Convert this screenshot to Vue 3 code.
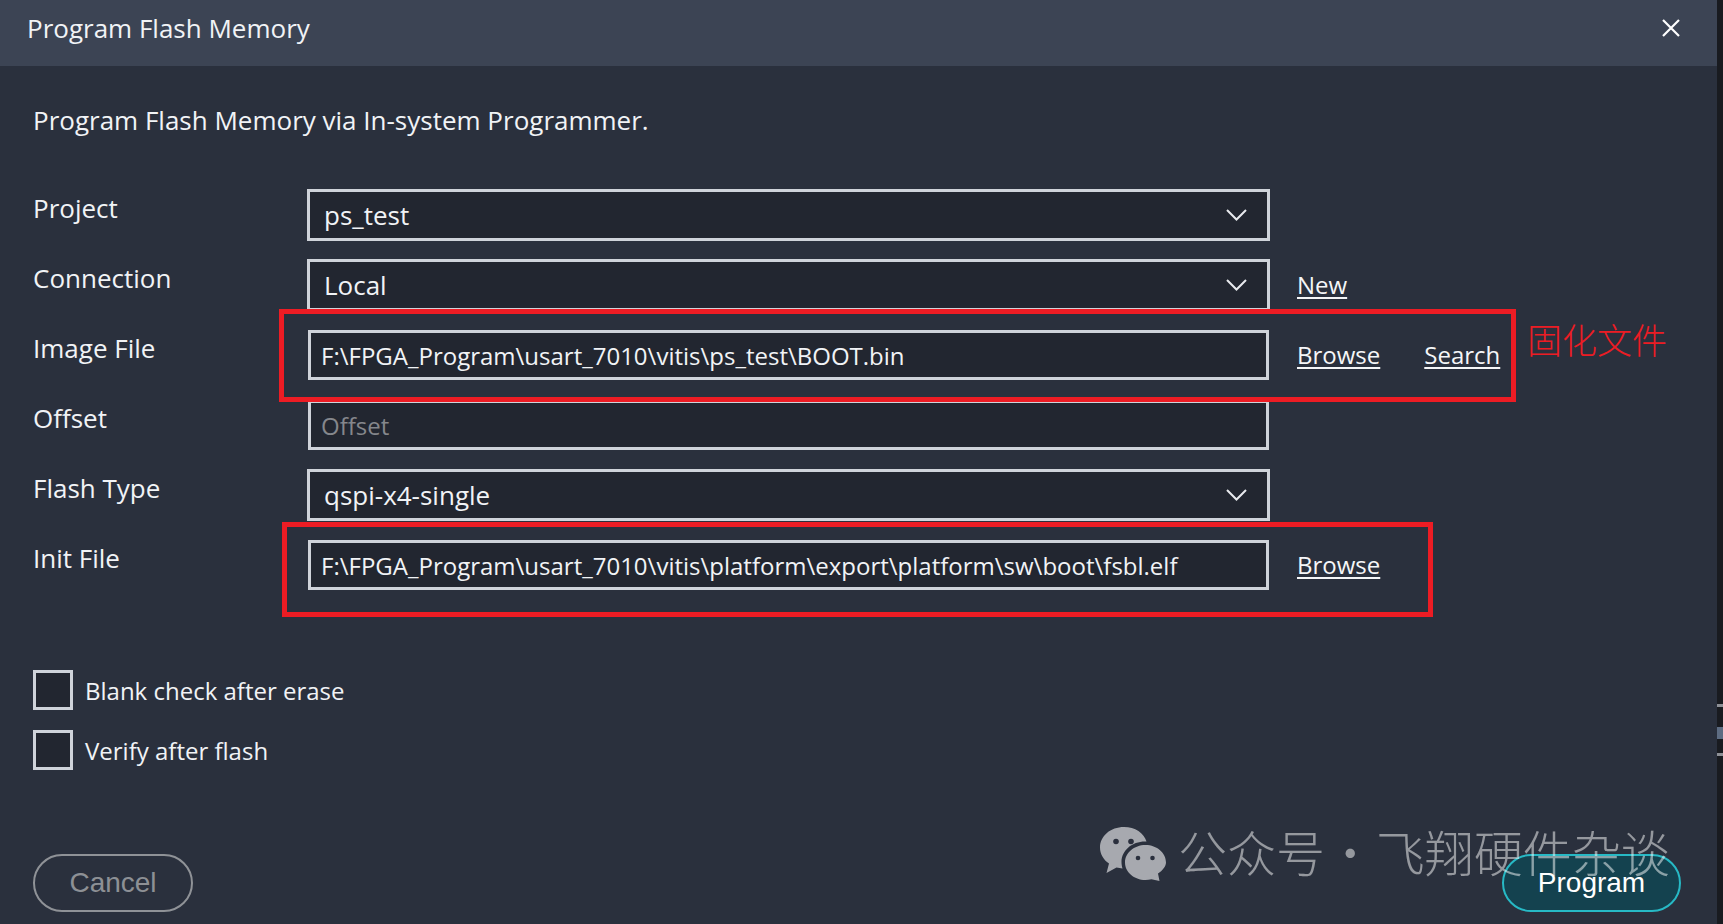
<script setup>
const rows = [
  { label: 'Project', kind: 'select', value: 'ps_test', links: [] },
  { label: 'Connection', kind: 'select', value: 'Local', links: ['New'] },
  { label: 'Image File', kind: 'input', value: 'F:\\FPGA_Program\\usart_7010\\vitis\\ps_test\\BOOT.bin', links: ['Browse', 'Search'] },
  { label: 'Offset', kind: 'input', value: '', placeholder: 'Offset', links: [] },
  { label: 'Flash Type', kind: 'select', value: 'qspi-x4-single', links: [] },
  { label: 'Init File', kind: 'input', value: 'F:\\FPGA_Program\\usart_7010\\vitis\\platform\\export\\platform\\sw\\boot\\fsbl.elf', links: ['Browse'] },
]
const checks = ['Blank check after erase', 'Verify after flash']
</script>

<template>
  <div class="page">
    <div class="dialog">
      <header class="head">
        <span class="title">Program Flash Memory</span>
        <svg class="close" width="18" height="18" viewBox="0 0 18 18" aria-label="Close">
          <path d="M1 1 17 17M17 1 1 17" stroke="#fff" stroke-width="2.2" fill="none" />
        </svg>
      </header>
      <main class="body">
        <p class="desc">Program Flash Memory via In-system Programmer.</p>
        <div class="form">
          <div v-for="r in rows" :key="r.label" class="row">
            <label class="lbl">{{ r.label }}</label>
            <div v-if="r.kind === 'select'" class="select">
              <span>{{ r.value }}</span>
              <svg width="21" height="12" viewBox="0 0 21 12">
                <path d="M1 1 10.5 10.5 20 1" stroke="#e8eaee" stroke-width="2" fill="none" />
              </svg>
            </div>
            <input v-else class="input" readonly :value="r.value" :placeholder="r.placeholder" />
            <div class="links">
              <a v-for="l in r.links" :key="l" class="link">{{ l }}</a>
            </div>
          </div>
        </div>
        <div class="checks">
          <label v-for="c in checks" :key="c" class="check">
            <span class="box"></span>
            <span>{{ c }}</span>
          </label>
        </div>
        <footer class="foot">
          <button class="btn cancel">Cancel</button>
          <button class="btn program">Program</button>
        </footer>
      </main>
    </div>
    <div class="strip">
      <i class="mark m1"></i>
      <i class="mark m2"></i>
      <i class="mark m3"></i>
    </div>

    <div class="red r1"></div>
    <div class="red r2"></div>
    <div class="note">固化文件</div>
    <div class="wm">
      <svg width="68" height="54" viewBox="0 0 68 54">
        <path fill="#a7a9af" d="M25 0C11.500 0 1 9 1 20.500c0 6.600 3.500 12.300 9 16.100L7.500 46 17.500 40.500c2 .5 4 .8 6 .9C22.800 39 22.500 37 22.500 35c0-11.500 10.500-20.500 23.500-20.500h1.500C45 6 36 0 25 0Z" />
        <path fill="#a7a9af" d="M46.500 18C35 18 26 26 26 35.500S35 53 46.500 53c2 0 4-.3 6-.8L60.500 54 59 46.500c5-3.200 8-7.500 8-11C67 26 58 18 46.500 18Z" />
        <circle cx="17" cy="14.500" r="2.800" fill="#2a2f3d" />
        <circle cx="32" cy="14.500" r="2.800" fill="#2a2f3d" />
        <circle cx="39" cy="31" r="2.300" fill="#2a2f3d" />
        <circle cx="53.500" cy="31" r="2.300" fill="#2a2f3d" />
      </svg>
      <span class="wm-text">公众号 · 飞翔硬件杂谈</span>
    </div>
  </div>
</template>

<style>
html, body { margin: 0; background: #1a1c22; }
</style>

<style scoped>
.page {
  position: relative;
  display: flex;
  width: 1723px;
  height: 924px;
  overflow: hidden;
  font-family: "Open Sans", "Noto Sans", sans-serif;
  color: #f1f3f6;
}
.dialog {
  width: 1717px;
  display: flex;
  flex-direction: column;
  background: #2a303d;
}
.strip {
  position: relative;
  width: 6px;
  background: #191b20;
}
.mark { position: absolute; left: 0; width: 6px; display: block; background: #8d9096; }
.m1 { top: 704px; height: 3px; }
.m2 { top: 727px; height: 12px; background: #5d6c82; }
.m3 { top: 753px; height: 3px; }
.head {
  box-sizing: border-box;
  height: 66px;
  flex: none;
  display: flex;
  align-items: center;
  justify-content: space-between;
  padding: 0 37px 10px 27px;
  background: #3c4454;
}
.title { font-size: 26px; line-height: 36px; }
.body {
  flex: 1;
  display: flex;
  flex-direction: column;
  padding: 0 36px 12px 33px;
}
.desc {
  margin: 37px 0 0;
  height: 77px;
  font-size: 26px;
  line-height: 34px;
}
.form { display: flex; flex-direction: column; }
.row {
  display: grid;
  grid-template-columns: 274px 963px 1fr;
  align-items: center;
  height: 70px;
}
.lbl { font-size: 26px; line-height: 34px; margin-bottom: 14px; }
.select, .input {
  box-sizing: border-box;
  border: 3px solid #cfd3da;
  background: #222630;
  color: #f1f3f6;
  font-family: inherit;
}
.select {
  height: 52px;
  display: flex;
  align-items: center;
  justify-content: space-between;
  padding: 0 20px 0 14px;
  font-size: 26px;
}
.input {
  height: 50px;
  width: 961px;
  margin: 0 1px;
  padding: 0 10px;
  font-size: 24px;
  outline: none;
}
.input::placeholder { color: #85878c; opacity: 1; }
.links {
  display: flex;
  gap: 44px;
  padding: 0 0 2px 27px;
  font-size: 24px;
}
.link { color: #f5f6f8; text-decoration: underline; text-underline-offset: 3px; }
.checks {
  display: flex;
  flex-direction: column;
  gap: 20px;
  margin-top: 70px;
}
.check {
  display: flex;
  align-items: center;
  gap: 12px;
  height: 40px;
  font-size: 24px;
}
.box {
  box-sizing: border-box;
  width: 40px;
  height: 40px;
  border: 3px solid #cfd3da;
  background: #222630;
}
.foot {
  display: flex;
  justify-content: space-between;
  margin-top: 84px;
}
.btn {
  box-sizing: border-box;
  height: 58px;
  border-radius: 29px;
  font-family: "Liberation Sans", Arial, sans-serif;
  font-size: 28px;
  padding: 0;
}
.cancel {
  width: 160px;
  background: transparent;
  border: 2px solid #8f9297;
  color: #8d9095;
}
.program {
  width: 179px;
  background: #14424f;
  border: 2px solid #27b9c5;
  color: #fff;
}
.red {
  position: absolute;
  box-sizing: border-box;
  border: 5px solid #ed1c24;
}
.r1 { left: 279px; top: 309px; width: 1237px; height: 93px; }
.r2 { left: 282px; top: 522px; width: 1151px; height: 95px; }
.note {
  position: absolute;
  left: 1527px;
  top: 314px;
  font-family: "Noto Sans CJK SC", sans-serif;
  font-weight: 300;
  font-size: 35px;
  line-height: 50px;
  color: #ed1c24;
}
.wm {
  position: absolute;
  left: 1099px;
  top: 827px;
  display: flex;
  align-items: flex-start;
  gap: 11px;
}
.wm-text {
  font-family: "Noto Sans CJK SC", sans-serif;
  font-weight: 300;
  font-size: 49px;
  line-height: 54px;
  margin-top: -3px;
  word-spacing: -10px;
  color: rgba(255, 255, 255, 0.5);
  white-space: nowrap;
}
</style>
